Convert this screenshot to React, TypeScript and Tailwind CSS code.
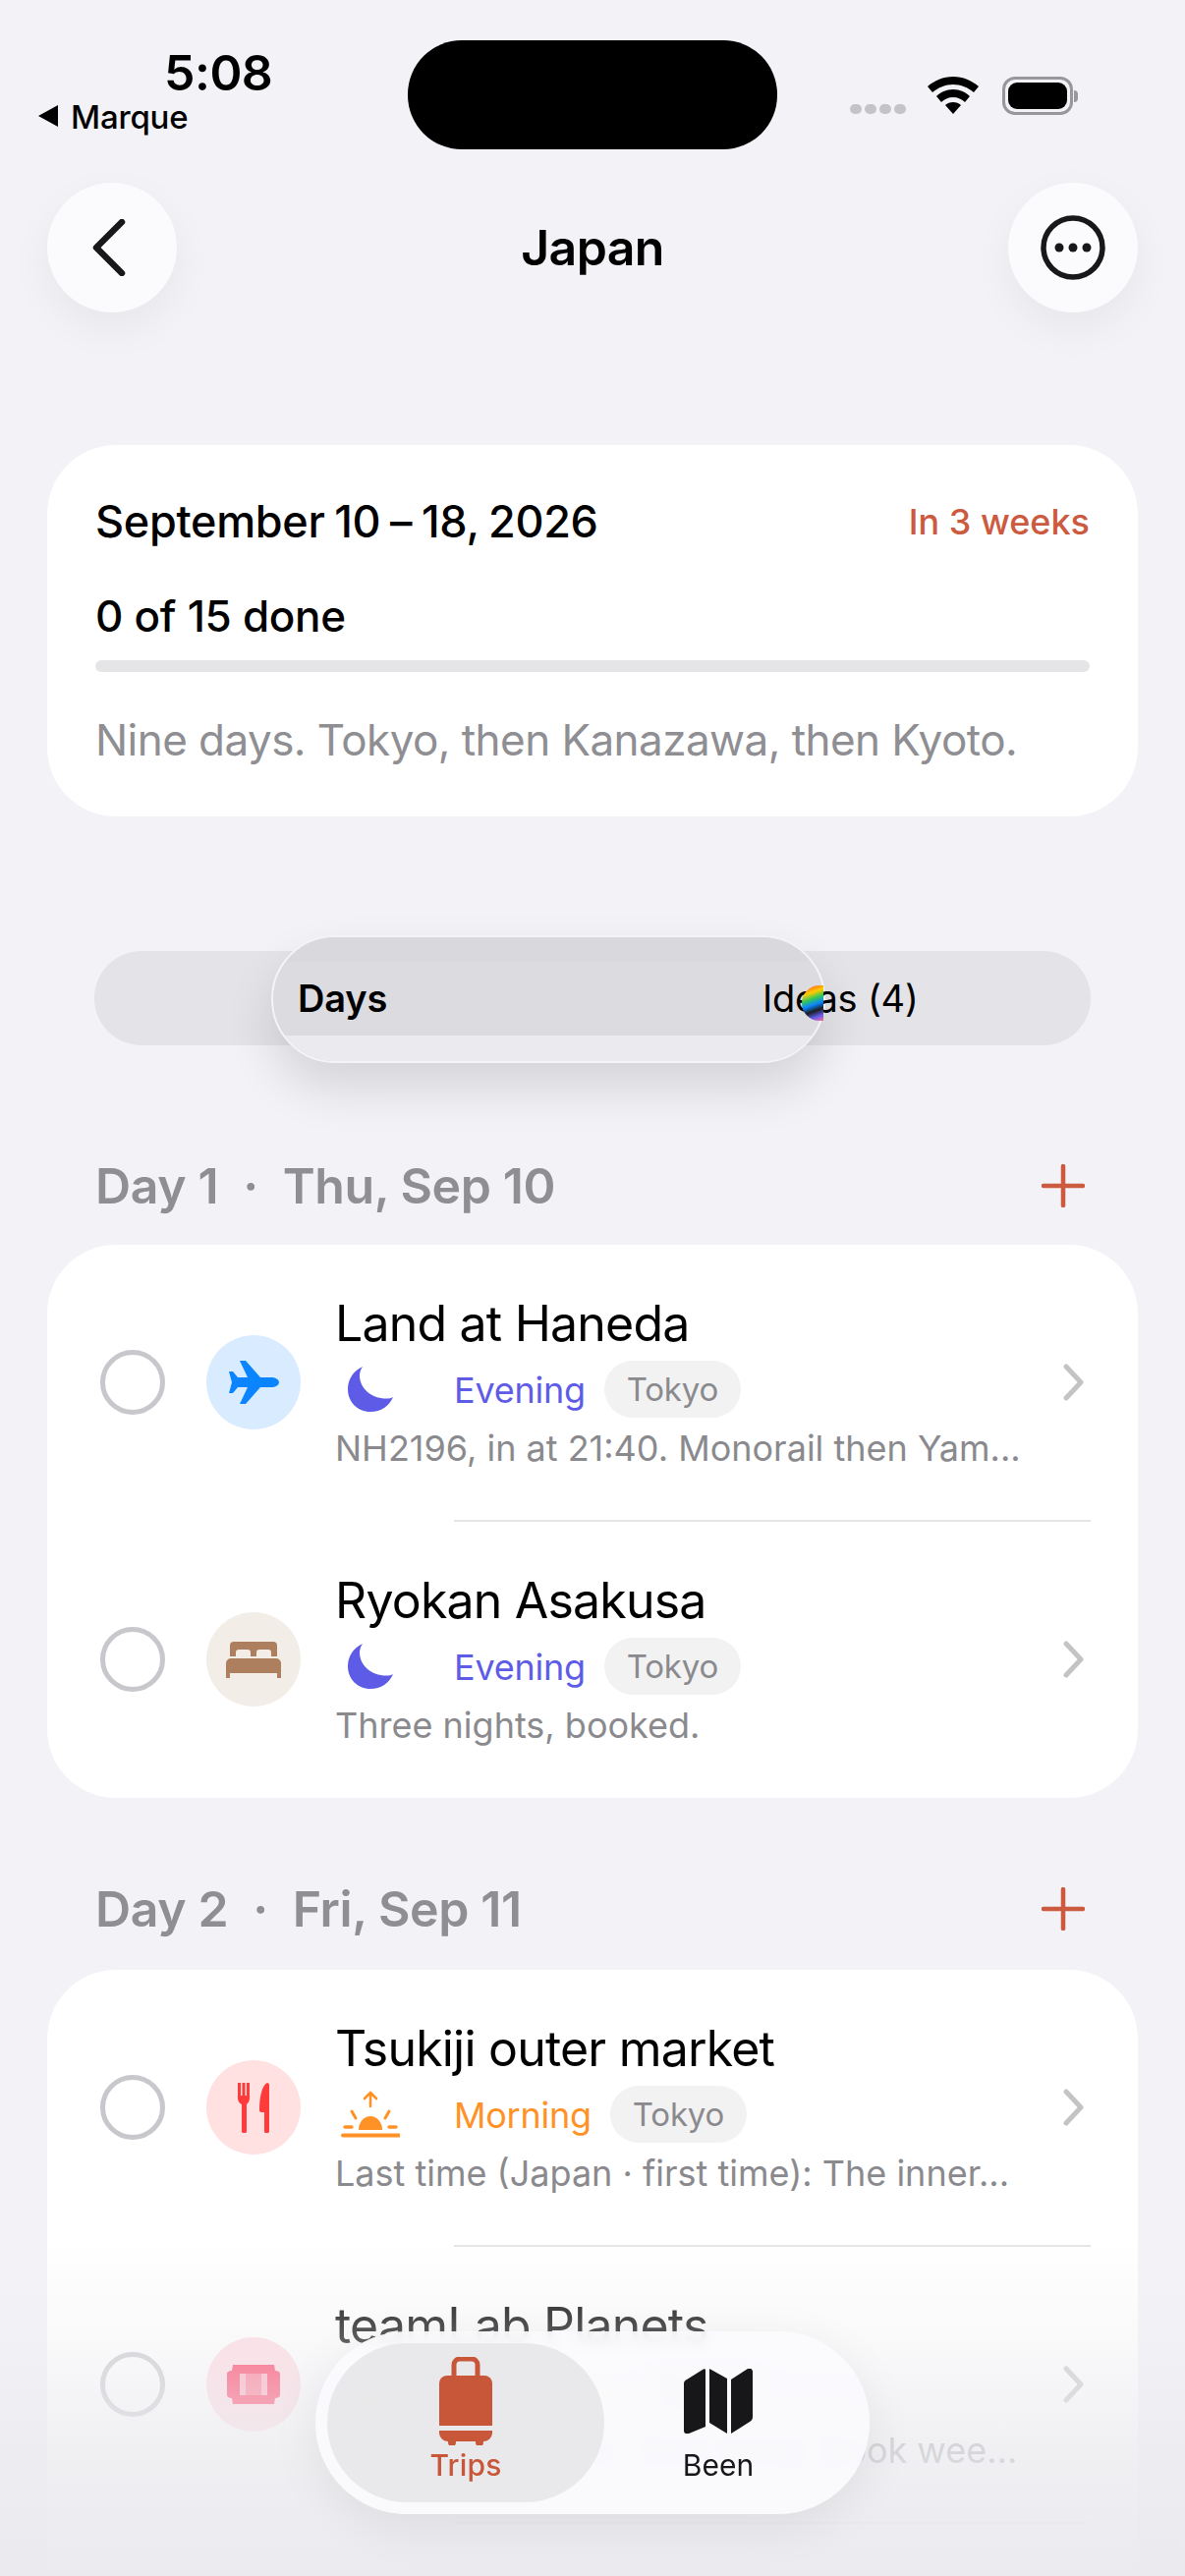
import React from "react";

const Moon = () => (
  <svg width="46" height="46" viewBox="0 0 46 46" className="ml-[13px] mr-[62px] shrink-0">
    <path d="M15 0C5 5 0 13 0 23c0 13 10 23 23 23 11 0 19-6 23-15-2 1-4 1.500-7 1.500C24 32.500 12 22 12 9c0-3 1-6 3-9Z" fill="#5e5ce6" />
  </svg>
);

const Sunrise = ({ c = "#ff9227" }: { c?: string }) => (
  <svg width="60" height="48" viewBox="0 0 60 48" className="ml-[6px] mr-[55px] shrink-0">
    <path d="M30 2v14M24 8l6-6 6 6" stroke={c} strokeWidth="2.600" fill="none" strokeLinecap="round" strokeLinejoin="round" />
    <path d="M18 40a12 14 0 0 1 24 0Z" fill={c} />
    <path d="M11 21l4 7M49 21l-4 7" stroke={c} strokeWidth="3" strokeLinecap="round" />
    <path d="M4 37h7M49 37h7" stroke={c} strokeWidth="3.400" strokeLinecap="round" />
    <path d="M2 45.500h57" stroke={c} strokeWidth="4" strokeLinecap="round" />
  </svg>
);

const Plane = () => (
  <svg width="51" height="44" viewBox="0 0 51 44">
    <path d="M51 22c0 3-4 5-8 5H32L17 44h-6l8-17H9l-5 6H0l3-11L0 11h4l5 6h10L11 0h6l15 17h11c4 0 8 2 8 5Z" fill="#0a84ff" />
  </svg>
);

const Bed = () => (
  <svg width="56" height="37" viewBox="0 0 56 37">
    <path fillRule="evenodd" d="M8 0h40a4 4 0 0 1 4 4v11h-6v-4a3 3 0 0 0-3-3h-9a3 3 0 0 0-3 3v4h-6v-4a3 3 0 0 0-3-3h-9a3 3 0 0 0-3 3v4H4V4a4 4 0 0 1 4-4Z" fill="#ad7f5f" />
    <path d="M5 17h46a5 5 0 0 1 5 5v15h-4v-5H4v5H0V22a5 5 0 0 1 5-5Z" fill="#ad7f5f" />
  </svg>
);

const Fork = () => (
  <svg width="32" height="51" viewBox="0 0 32 51">
    <path d="M0 0h3v13h1.500V0h3v13H9V0h3v16c0 3-2 5-3 6v27a2.500 2.500 0 0 1-5 0V22c-2-1-4-3-4-6Z" fill="#ff3b3b" />
    <path d="M30 0c1 0 2 1 2 2v47a2.500 2.500 0 0 1-5 0V30h-3c-1 0-2-1-2-2C22 14 25 2 30 0Z" fill="#ff3b3b" />
  </svg>
);

const Ticket = () => (
  <svg width="54" height="40" viewBox="0 0 54 40">
    <path fillRule="evenodd" d="M6 0h42l1 6c2 0 5 1 5 3v22c0 2-3 3-5 3l-1 6H6l-1-6c-2 0-5-1-5-3V9c0-2 3-3 5-3ZM13 9v22h28V9Z" fill="#ff2d55" />
    <path d="M13 9h28v22H13Z" fill="#ff2d55" opacity="0.3" />
    <path d="M19 9h16v22H19Z" fill="#ff2d55" opacity="0.5" />
  </svg>
);

const Circle = () => <div className="w-[66px] h-[66px] rounded-full border-[5px] border-[#c7c7cc] shrink-0" />;

const Chevron = () => (
  <svg width="24" height="38" viewBox="0 0 24 38" className="shrink-0">
    <path d="M4 3l15 16L4 35" stroke="#c4c4c7" strokeWidth="5" fill="none" strokeLinecap="round" strokeLinejoin="round" />
  </svg>
);

type RowProps = {
  icon: React.ReactNode;
  iconBg: string;
  title: string;
  time: React.ReactNode;
  label: string;
  labelClass: string;
  desc: string;
  divider?: boolean;
};

const Row = ({ icon, iconBg, title, time, label, labelClass, desc, divider }: RowProps) => (
  <div>
    <div className="h-[280px] flex items-center pl-[54px] pr-[53px]">
      <Circle />
      <div className={`w-[96px] h-[96px] rounded-full flex items-center justify-center ml-[42px] mr-[35px] shrink-0 ${iconBg}`}>{icon}</div>
      <div className="flex-1 min-w-0 -mt-[1px]">
        <div className="text-[50px] leading-[60px] text-black tracking-[-0.8px]">{title}</div>
        <div className="flex items-center h-[58px] mt-[8px]">
          {time}
          <span className={`text-[36px] leading-[40px] mt-[2px] mr-[19px] tracking-[-0.25px] ${labelClass}`}>{label}</span>
          <span className="h-[58px] px-[23px] rounded-full bg-[#f2f2f3] text-[#8a8a8e] text-[33px] leading-[58px] tracking-[-0.2px]">Tokyo</span>
        </div>
        <div className="text-[36px] leading-[44px] mt-[9px] text-[#8a8a8e] whitespace-nowrap">{desc}</div>
      </div>
      <Chevron />
    </div>
    {divider && <div className="h-[2px] ml-[414px] mr-[48px] bg-[#e5e5e7]" />}
  </div>
);

const Header = ({ left, right, className }: { left: string; right: string; className: string }) => (
  <div className={`h-[60px] ml-[97px] mr-[102px] flex items-center justify-between ${className}`}>
    <div className="text-[50px] font-semibold text-[#8e8e93] tracking-[-0.4px] whitespace-pre">
      {left}
      <span className="mx-[25px]">·</span>
      {right}
    </div>
    <svg width="44" height="44" viewBox="0 0 44 44">
      <path d="M22 2v40M2 22h40" stroke="#cc5a3f" strokeWidth="4.500" strokeLinecap="round" />
    </svg>
  </div>
);

export default function App() {
  return (
    <div className="relative w-[1206px] h-[2622px] overflow-hidden bg-[#f2f2f7] font-['Inter','Liberation_Sans',sans-serif] text-black">
      {/* status bar */}
      <div className="h-[186px] flex">
        <div className="w-[415px] pt-[47px] shrink-0">
          <div className="pl-[167px] text-[50px] leading-[54px] font-semibold tracking-[-0.5px]">5:08</div>
          <div className="flex items-center pl-[38px] -mt-[1px]">
            <svg width="22" height="24" viewBox="0 0 22 24" className="mr-[12px]"><path d="M21 0v22L1 11Z" fill="#000" /></svg>
            <span className="text-[33px] leading-[38px] font-medium tracking-[-0.2px]">Marque</span>
          </div>
        </div>
        <div className="w-[376px] h-[111px] mt-[41px] rounded-[55px] bg-black shrink-0" />
        <div className="flex items-start ml-[74px] pt-[78px]">
          <div className="flex gap-[3px] mt-[28px] mr-[22px]">
            {[0, 1, 2, 3].map((i) => <div key={i} className="w-[12px] h-[10px] rounded-full bg-[#c4c4c7]" />)}
          </div>
          <svg width="52" height="38" viewBox="0 0 52 38" className="mr-[24px]">
            <path d="M26 0c10 0 19 4 26 10l-5 6C41 11 34 8 26 8S11 11 5 16l-5-6C7 4 16 0 26 0Z" fill="#000" />
            <path d="M26 13c7 0 13 3 17 7l-5 6c-3-3-7-5-12-5s-9 2-12 5l-5-6c4-4 10-7 17-7Z" fill="#000" />
            <path d="M26 26c3 0 6 1 8 3l-8 9-8-9c2-2 5-3 8-3Z" fill="#000" />
          </svg>
          <div className="w-[72px] h-[39px] rounded-[13px] border-[3px] border-[#98989c] p-[3px]">
            <div className="w-full h-full rounded-[9px] bg-black" />
          </div>
          <div className="w-[4px] h-[12px] mt-[14px] ml-[1px] rounded-r-full bg-[#98989c]" />
        </div>
      </div>

      {/* nav */}
      <div className="h-[132px] mx-[48px] flex items-center justify-between">
        <div className="w-[132px] h-[132px] rounded-full bg-[#fbfbfd] shadow-[0_16px_44px_rgba(0,0,0,0.05)] flex items-center justify-center">
          <svg width="36" height="58" viewBox="0 0 36 58" className="-ml-[6px]">
            <path d="M31 3 5 29l26 26" stroke="#18181b" strokeWidth="6.500" fill="none" strokeLinecap="round" strokeLinejoin="round" />
          </svg>
        </div>
        <div className="text-[50px] font-semibold tracking-[-0.6px]">Japan</div>
        <div className="w-[132px] h-[132px] rounded-full bg-[#fbfbfd] shadow-[0_16px_44px_rgba(0,0,0,0.05)] flex items-center justify-center">
          <svg width="66" height="66" viewBox="0 0 66 66">
            <circle cx="33" cy="33" r="30" stroke="#18181b" strokeWidth="5.500" fill="none" />
            <circle cx="19" cy="33" r="4.500" fill="#18181b" />
            <circle cx="33" cy="33" r="4.500" fill="#18181b" />
            <circle cx="47" cy="33" r="4.500" fill="#18181b" />
          </svg>
        </div>
      </div>

      {/* summary */}
      <div className="mt-[135px] mx-[48px] h-[378px] rounded-[70px] bg-white pl-[49px] pr-[49px] pt-[48px]">
        <div className="flex items-center justify-between h-[60px]">
          <span className="text-[45px] font-medium tracking-[-0.3px] [word-spacing:-2px] whitespace-pre">September 10 – 18, 2026</span>
          <span className="text-[36px] font-medium text-[#cc5a3f]">In 3 weeks</span>
        </div>
        <div className="text-[44px] leading-[60px] mt-[36px] font-medium tracking-[-0.3px]">0 of 15 done</div>
        <div className="h-[12px] mt-[15px] rounded-full bg-[#e5e5e7]" />
        <div className="text-[44px] leading-[60px] mt-[39px] text-[#8e8e93] tracking-[-0.55px] whitespace-nowrap">Nine days. Tokyo, then Kanazawa, then Kyoto.</div>
      </div>

      {/* segment */}
      <div className="relative mt-[137px] mx-[96px] w-[1014px] h-[96px] rounded-full bg-[#e3e3e8]">
        <div className="absolute left-[180px] top-[-16px] w-[564px] h-[130px] rounded-[65px] overflow-hidden border-2 border-[#f4f4f6] bg-[#dcdce0] shadow-[0_26px_50px_rgba(0,0,0,0.12)] flex flex-col">
          <div className="h-[24px] bg-[#d9d9dd]" />
          <div className="flex-1" />
          <div className="h-[26px] bg-[#ebebef]" />
        </div>
        <div className="relative h-full flex items-center pl-[207px] text-[38px] tracking-[-0.2px]">
          <span className="w-[473px] font-semibold">Days</span>
          <span>Ideas (4)</span>
        </div>
        <div className="absolute left-[720px] top-[35px] w-[22px] h-[36px] rounded-l-full overflow-hidden bg-[linear-gradient(160deg,#ff3b30,#ffcc00_25%,#34c759_40%,#0a84ff_55%,#1c1c1e_70%,#5e5ce6_85%,#ff6b9d)]" />
      </div>

      <Header className="mt-[113px]" left="Day 1" right="Thu, Sep 10" />

      <div className="mt-[30px] mx-[48px] h-[563px] rounded-[70px] bg-white overflow-hidden">
        <Row icon={<Plane />} iconBg="bg-[#d9ecff]" title="Land at Haneda" time={<Moon />} label="Evening" labelClass="text-[#5e5ce6]" desc="NH2196, in at 21:40. Monorail then Yam..." divider />
        <Row icon={<Bed />} iconBg="bg-[#f3ede7]" title="Ryokan Asakusa" time={<Moon />} label="Evening" labelClass="text-[#5e5ce6]" desc="Three nights, booked." />
      </div>

      <Header className="mt-[83px]" left="Day 2" right="Fri, Sep 11" />

      <div className="mt-[32px] mx-[48px] h-[900px] rounded-t-[70px] bg-white overflow-hidden">
        <Row icon={<Fork />} iconBg="bg-[#ffe1e1]" title="Tsukiji outer market" time={<Sunrise />} label="Morning" labelClass="text-[#ff9227]" desc="Last time (Japan · first time): The inner..." divider />
        <Row icon={<Ticket />} iconBg="bg-[#ffd9e0]" title="teamLab Planets" time={<Sunrise c="#ffd60a" />} label="Afternoon" labelClass="text-[#ffd60a]" desc="Last time (Japan · first time): Book wee..." divider />
      </div>

      {/* bottom fade */}
      <div className="absolute left-0 right-0 bottom-0 h-[340px] bg-[linear-gradient(to_bottom,rgba(236,236,240,0)_0%,rgba(240,240,243,0.4)_30%,rgba(236,236,240,0.78)_62%,rgba(234,234,238,0.96)_100%)]" />

      {/* tab bar */}
      <div className="absolute left-[321px] top-[2373px] w-[564px] h-[186px] rounded-[93px] bg-[#fbfbfe]/90 backdrop-blur-[6px] shadow-[0_12px_50px_rgba(0,0,0,0.07)] p-[12px] flex">
        <div className="w-[282px] h-[162px] rounded-[81px] bg-[#e6e6e9]/85 flex flex-col items-center pt-[14px] text-[#c8573a]">
          <svg width="54" height="90" viewBox="0 0 54 90">
            <path d="M15 20V8a6 6 0 0 1 6-6h12a6 6 0 0 1 6 6v12" stroke="#c8573a" strokeWidth="5" fill="none" />
            <path d="M8 19h38a8 8 0 0 1 8 8v43H0V27a8 8 0 0 1 8-8Z" fill="#c8573a" />
            <path d="M0 75h54v3a9 9 0 0 1-9 8H9a9 9 0 0 1-9-8Z" fill="#c8573a" />
            <path d="M9 85h8v2a4 4 0 0 1-8 0ZM37 85h8v2a4 4 0 0 1-8 0Z" fill="#c8573a" />
          </svg>
          <span className="text-[30px] leading-[36px] font-medium mt-[2px] tracking-[0.2px]">Trips</span>
        </div>
        <div className="w-[256px] flex flex-col items-center pt-[26px] -ml-[12px] text-[#17171a]">
          <svg width="70" height="66" viewBox="0 0 70 66">
            <path d="M22 1v58L5 66c-2 1-5 0-5-3V15c0-2 1-3 3-4L19 1c1-1 3-1 3 0Z" fill="#17171a" />
            <path d="M26 0l18 10v56L26 55Z" fill="#17171a" />
            <path d="M48 11 65 0c2-1 5 0 5 3v46c0 2-1 4-3 5L48 66Z" fill="#17171a" />
          </svg>
          <span className="text-[30px] leading-[36px] font-normal mt-[14px]">Been</span>
        </div>
      </div>
    </div>
  );
}
